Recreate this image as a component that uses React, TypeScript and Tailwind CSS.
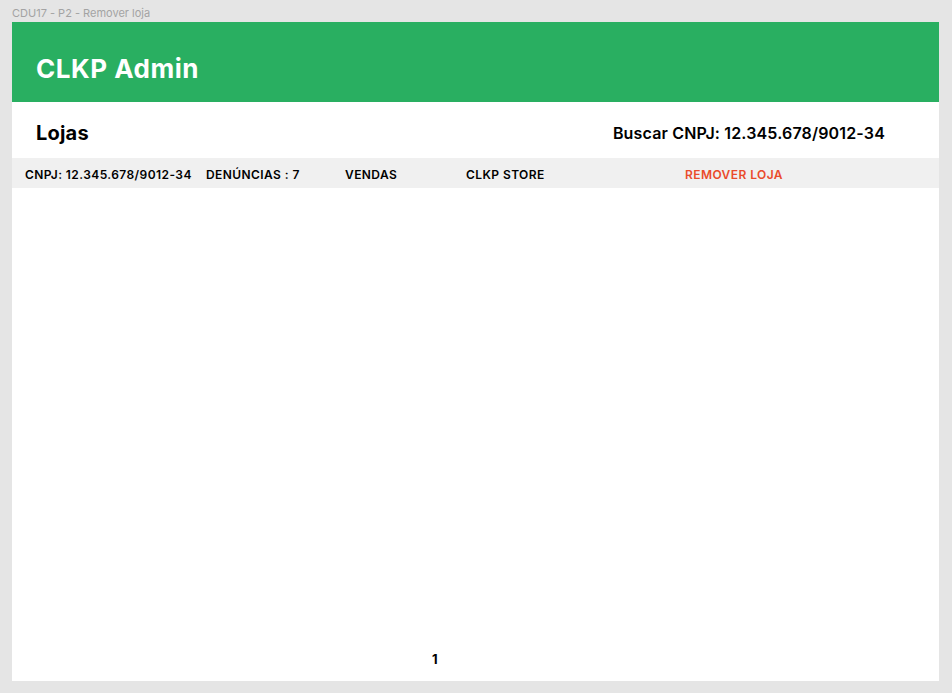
const font = { fontFamily: "Inter, 'Open Sans', sans-serif" };

const row = [
  { label: "CNPJ: 12.345.678/9012-34", w: "w-[181px]" },
  { label: "DENÚNCIAS : 7", w: "w-[139px]" },
  { label: "VENDAS", w: "w-[121px]" },
  { label: "CLKP STORE", w: "w-[219px]" },
];

export default function App() {
  return (
    <div className="min-h-[693px] w-full bg-[#e5e5e5] px-3 pb-3" style={font}>
      <div className="flex h-[22px] items-center pt-[4px] text-[11px] text-[#a3a3a3]">
        CDU17 - P2 - Remover loja
      </div>

      <div className="flex h-[659px] w-[927px] flex-col bg-white">
        {/* header */}
        <div className="flex h-[80px] items-center bg-[#29af61] px-6 pt-3">
          <h1 className="text-[26px] font-bold tracking-[0.02em] text-white">CLKP Admin</h1>
        </div>

        <div className="flex h-[56px] items-center justify-between pl-6 pr-[54px] pt-[5px]">
          <h2 className="text-[20px] font-bold tracking-[0.01em] text-black">Lojas</h2>
          <span className="text-[16px] font-semibold tracking-[0.01em] text-black">
            Buscar CNPJ: 12.345.678/9012-34
          </span>
        </div>

        {/* list row */}
        <div className="flex h-[30px] items-center bg-[#f0f0f0] pl-[13px] pt-[4px] text-[12px] font-semibold tracking-[0.035em] text-black">
          {row.map((c) => (
            <span key={c.label} className={c.w}>
              {c.label}
            </span>
          ))}
          <span className="text-[#ea4b2b]">REMOVER LOJA</span>
        </div>

        <div className="flex-1" />

        {/* pagination */}
        <div className="flex h-[41px] items-start justify-start pl-[420px] pt-[10px]">
          <span className="text-[13px] font-bold text-black">1</span>
        </div>
      </div>
    </div>
  );
}
